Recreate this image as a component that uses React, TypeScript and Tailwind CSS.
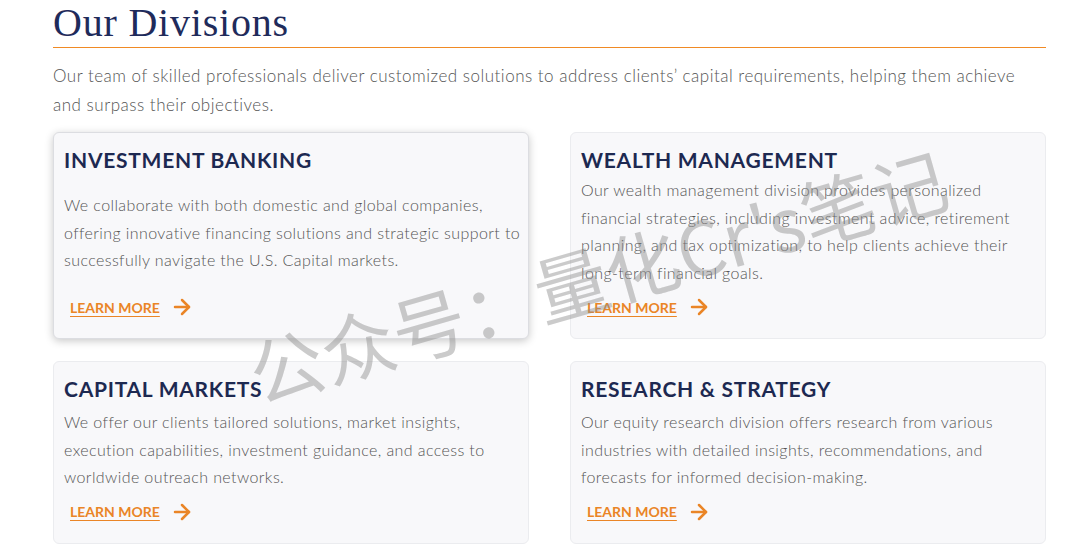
import React, { JSX } from "react";
import { ArrowRight } from "lucide-react";

type Division = {
  title: string;
  text: string;
  titleGap: string;
  raised?: boolean;
};

const divisions: Division[] = [
  {
    title: "Investment Banking",
    text: "We collaborate with both domestic and global companies, offering innovative financing solutions and strategic support to successfully navigate the U.S. Capital markets.",
    titleGap: "mb-[17px]",
    raised: true,
  },
  {
    title: "Wealth Management",
    text: "Our wealth management division provides personalized financial strategies, including investment advice, retirement planning, and tax optimization, to help clients achieve their long-term financial goals.",
    titleGap: "mb-[2px]",
  },
  {
    title: "Capital Markets",
    text: "We offer our clients tailored solutions, market insights, execution capabilities, investment guidance, and access to worldwide outreach networks.",
    titleGap: "mb-[5px]",
  },
  {
    title: "Research & Strategy",
    text: "Our equity research division offers research from various industries with detailed insights, recommendations, and forecasts for informed decision-making.",
    titleGap: "mb-[5px]",
  },
];

// Kort för en avdelning
function DivisionCard({ d }: { d: Division }): JSX.Element {
  return (
    <div
      className={
        d.raised
          ? "flex flex-col rounded-md border border-[#dcdde1] bg-[#f8f8fa] pl-[10px] pr-[4px] pt-[13px] pb-[21px] shadow-[0_2px_8px_rgba(0,0,0,0.22)]"
          : "flex flex-col rounded-md border border-[#ebecef] bg-[#f8f8fa] pl-[10px] pr-[4px] pt-[13px] pb-[21px]"
      }
    >
      <h3
        className={`${d.titleGap} text-[21px] leading-[28px] font-bold uppercase tracking-[0.035em] text-[#1d2951]`}
      >
        {d.title}
      </h3>
      <p className="text-[16px] leading-[27.5px] font-light tracking-[0.4px] text-[#555]">
        {d.text}
      </p>
      <div className="mt-auto pt-[11px]">
        <a
          href="#"
          className="ml-[6px] flex h-[20px] items-center gap-[10px] text-[14px] font-bold uppercase text-[#ea8526]"
        >
          <span className="underline underline-offset-[3px]">Learn more</span>
          <ArrowRight size={24} strokeWidth={2.5} />
        </a>
      </div>
    </div>
  );
}

export default function App(): JSX.Element {
  return (
    <div
      className="relative h-[557px] w-full overflow-hidden bg-white"
      style={{ fontFamily: "Lato, 'Noto Sans', sans-serif" }}
    >
      <div className="ml-[53px] w-[993px]">
        <h2
          className="pt-[1px] text-[40px] leading-[44px] tracking-[0.02em] text-[#1f2b5b]"
          style={{ fontFamily: "'Liberation Serif', serif" }}
        >
          Our Divisions
        </h2>
        <div className="mt-[2px] h-px w-full bg-[#f08a24]" />
        <p className="mt-[13px] text-[17px] leading-[29px] font-light tracking-[0.5px] text-[#555]">
          Our team of skilled professionals deliver customized solutions to address clients’ capital
          requirements, helping them achieve and surpass their objectives.
        </p>

        <div className="mt-[13px] grid grid-cols-2 gap-x-[41px] gap-y-[22px]">
          {divisions.map((d) => (
            <DivisionCard key={d.title} d={d} />
          ))}
        </div>
      </div>

      {/* vattenstämpel */}
      <div
        className="pointer-events-none absolute left-[597px] top-[274px] -translate-x-1/2 -translate-y-1/2 -rotate-[16deg] whitespace-nowrap text-[74px] leading-none text-[rgba(140,140,140,0.45)]"
        style={{ fontFamily: "'Noto Sans CJK SC', 'Noto Sans', sans-serif" }}
      >
        公众号：量化Cr's笔记
      </div>
    </div>
  );
}
